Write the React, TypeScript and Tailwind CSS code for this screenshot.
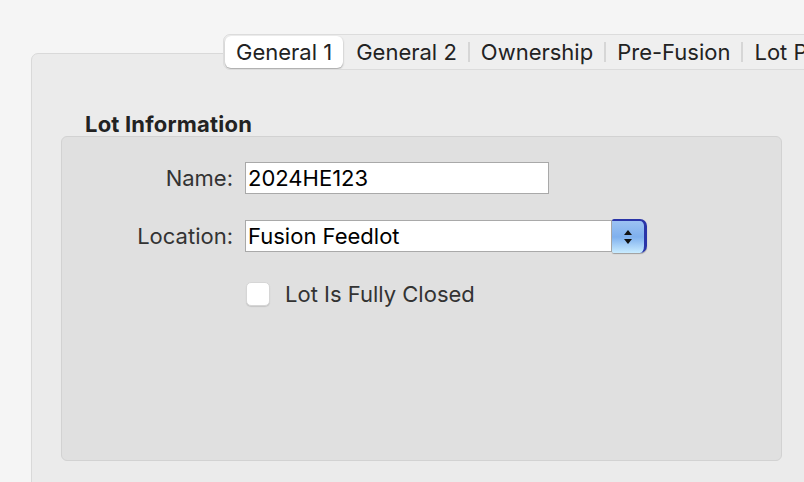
import React from "react";

const font = { fontFamily: "Inter, 'Noto Sans', 'Liberation Sans', sans-serif" };

function Tab({ label, active, sep }: { label: string; active?: boolean; sep?: boolean }) {
  return (
    <div className="flex items-center h-full">
      <div className={sep ? "w-[2px] h-[20px] bg-[#d6d6d6]" : "w-[2px] h-[20px]"} />
      <div
        className={
          active
            ? "h-[32px] px-[11px] flex items-center bg-white rounded-[6px] shadow-[0_1px_2px_rgba(0,0,0,0.35)] text-[#222]"
            : "h-[32px] px-[11px] flex items-center text-[#222]"
        }
      >
        {label}
      </div>
    </div>
  );
}

export default function App() {
  return (
    <div
      className="w-[804px] h-[482px] bg-[#f5f5f5] overflow-hidden pl-[31px] pt-[53px] text-[22px]"
      style={font}
    >
      <div className="relative w-[820px] h-[480px] bg-[#ebebeb] border border-[#d9d9d9] rounded-[7px]">
        <div className="absolute left-[191px] top-[-20px] h-[36px] w-[700px] flex items-center pl-[1px] bg-[#efefef] border border-[#dcdcdc] rounded-l-[7px] overflow-hidden whitespace-nowrap">
          <div className="flex items-center h-full ml-[-2px]">
            <Tab label="General 1" active />
            <Tab label="General 2" />
            <Tab label="Ownership" sep />
            <Tab label="Pre-Fusion" sep />
            <Tab label="Lot Performance" sep />
          </div>
        </div>
        <div className="pt-[57px] pl-[29px]">
          <div className="pl-[24px] h-[26px] font-bold tracking-[0.2px] text-[#222] leading-[26px]">Lot Information</div>
          <div className="mt-[-1px] w-[721px] h-[325px] bg-[#e0e0e0] border border-[#d2d2d2] rounded-[6px] pt-[25px]">
            <div className="flex items-center h-[32px]">
              <div className="w-[171px] text-right text-[#333]">Name:</div>
              <div className="ml-[12px] w-[304px] h-[32px] bg-white border border-[#a9a9a9] flex items-center pl-[2px] text-black">
                2024HE123
              </div>
            </div>
            <div className="flex items-center h-[34px] mt-[25px]">
              <div className="w-[171px] text-right text-[#333]">Location:</div>
              <div className="ml-[12px] w-[367px] h-[32px] bg-white border border-[#a9a9a9] flex items-center pl-[2px] text-black">
                Fusion Feedlot
              </div>
              <div className="w-[35px] h-[34px] rounded-r-[7px] rounded-l-[2px] border-t-2 border-r-[3px] border-[#2a35a8] bg-gradient-to-b from-[#9cc2f2] via-[#7fb0ee] to-[#c9ecff] flex items-center justify-center shadow-[0_1px_1px_rgba(0,0,0,0.3)]">
                <svg width="12" height="20" viewBox="0 0 12 20">
                  <path d="M6 3 L10 8 L2 8 Z" fill="#111" />
                  <path d="M6 17 L10 12 L2 12 Z" fill="#111" />
                </svg>
              </div>
            </div>
            <div className="flex items-center h-[26px] mt-[28px] pl-[184px]">
              <div className="w-[24px] h-[24px] bg-white rounded-[5px] border border-[#d6d6d6] shadow-[0_1px_1px_rgba(0,0,0,0.12)]" />
              <div className="ml-[15px] text-[#333]">Lot Is Fully Closed</div>
            </div>
          </div>
        </div>
      </div>
    </div>
  );
}
